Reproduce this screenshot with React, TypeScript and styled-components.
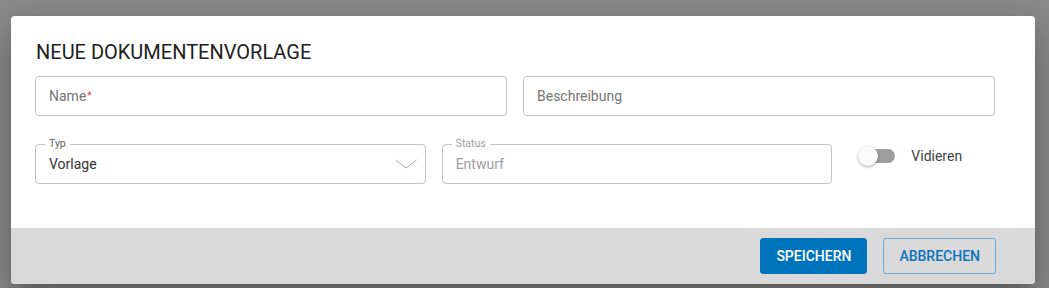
import styled, { createGlobalStyle } from "styled-components";

const GlobalStyle = createGlobalStyle`
  html, body {
    margin: 0;
    padding: 0;
    background: #8b8b8b;
    font-family: Roboto, "Liberation Sans", sans-serif;
  }
  * { box-sizing: border-box; }
`;

const Backdrop = styled.div`
  min-height: 288px;
  padding: 16px 14px 0 11px;
  background: #8b8b8b;
`;

const Dialog = styled.div`
  width: 1024px;
  background: #fff;
  border-radius: 4px;
  overflow: hidden;
  box-shadow: 0 11px 15px -7px rgba(0, 0, 0, 0.2),
    0 24px 38px 3px rgba(0, 0, 0, 0.14), 0 9px 46px 8px rgba(0, 0, 0, 0.12);
`;

const Body = styled.div`
  padding: 24px 40px 44px 24px;
`;

const Title = styled.h2`
  margin: 0 0 12px 1px;
  font-size: 20px;
  line-height: 24px;
  font-weight: 400;
  color: #212121;
  text-transform: uppercase;
`;

const Grid = styled.div<{ $gap?: number }>`
  display: grid;
  grid-template-columns: repeat(12, 1fr);
  column-gap: 16px;
  margin-top: ${(p) => p.$gap ?? 0}px;
`;

const Cell = styled.div<{ $span: number }>`
  grid-column: span ${(p) => p.$span};
  min-width: 0;
`;

const Field = styled.div`
  position: relative;
  height: 40px;
  border: 1px solid #c4c4c4;
  border-radius: 4px;
  display: flex;
  align-items: center;
  padding: 0 13px;
  font-size: 14px;
  color: #333;
`;

const Placeholder = styled.span`
  color: #757575;
`;

const Required = styled.span`
  color: #e53935;
  font-size: 10px;
  margin-left: 1px;
  position: relative;
  top: -1px;
`;

const Legend = styled.span<{ $disabled?: boolean }>`
  position: absolute;
  top: -7px;
  left: 9px;
  padding: 0 4px;
  background: #fff;
  font-size: 10.5px;
  line-height: 12px;
  color: ${(p) => (p.$disabled ? "#9e9e9e" : "#616161")};
`;

const Value = styled.span<{ $disabled?: boolean }>`
  flex: 1;
  color: ${(p) => (p.$disabled ? "#9e9e9e" : "#333")};
`;

const Chevron = styled.svg`
  flex: none;
  margin-right: -5px;
`;

const SwitchRow = styled.label`
  display: flex;
  align-items: center;
  gap: 16px;
  margin: 4px 0 0 9px;
  font-size: 14px;
  color: #424242;
`;

const Track = styled.span`
  position: relative;
  display: inline-block;
  width: 32px;
  height: 14px;
  margin-left: 6px;
  border-radius: 7px;
  background: #9e9e9e;
`;

const Thumb = styled.span`
  position: absolute;
  left: -5px;
  top: -3px;
  width: 20px;
  height: 20px;
  border-radius: 50%;
  background: #fafafa;
  box-shadow: 0 1px 3px rgba(0, 0, 0, 0.35);
`;

const Footer = styled.div`
  display: flex;
  justify-content: flex-end;
  gap: 16px;
  padding: 10px 39px 10px 24px;
  background: #d9d9d9;
`;

const Button = styled.button<{ $primary?: boolean }>`
  height: 36px;
  padding: 0 15px;
  border-radius: 3px;
  font-family: Roboto, "Liberation Sans", sans-serif;
  font-size: 14px;
  font-weight: 500;
  text-transform: uppercase;
  cursor: pointer;
  border: 1px solid ${(p) => (p.$primary ? "#0073bd" : "#6ea8d6")};
  background: ${(p) => (p.$primary ? "#0073bd" : "transparent")};
  color: ${(p) => (p.$primary ? "#fff" : "#0a74c0")};
`;

export default function App() {
  return (
    <>
      <GlobalStyle />
      <Backdrop>
        <Dialog>
          <Body>
            <Title>Neue Dokumentenvorlage</Title>
            <Grid>
              <Cell $span={6}>
                <Field>
                  <Placeholder>Name</Placeholder>
                  <Required>*</Required>
                </Field>
              </Cell>
              <Cell $span={6}>
                <Field>
                  <Placeholder>Beschreibung</Placeholder>
                </Field>
              </Cell>
            </Grid>
            <Grid $gap={28}>
              <Cell $span={5}>
                <Field>
                  <Legend>Typ</Legend>
                  <Value>Vorlage</Value>
                  <Chevron width="22" height="10" viewBox="0 0 22 10">
                    <path d="M0.5 1 L11 9 L21.5 1" fill="none" stroke="#aaaaaa" strokeWidth="1" />
                  </Chevron>
                </Field>
              </Cell>
              <Cell $span={5}>
                <Field>
                  <Legend $disabled>Status</Legend>
                  <Value $disabled>Entwurf</Value>
                </Field>
              </Cell>
              <Cell $span={2}>
                <SwitchRow>
                  <Track>
                    <Thumb />
                  </Track>
                  Vidieren
                </SwitchRow>
              </Cell>
            </Grid>
          </Body>
          <Footer>
            <Button $primary>Speichern</Button>
            <Button>Abbrechen</Button>
          </Footer>
        </Dialog>
      </Backdrop>
    </>
  );
}
